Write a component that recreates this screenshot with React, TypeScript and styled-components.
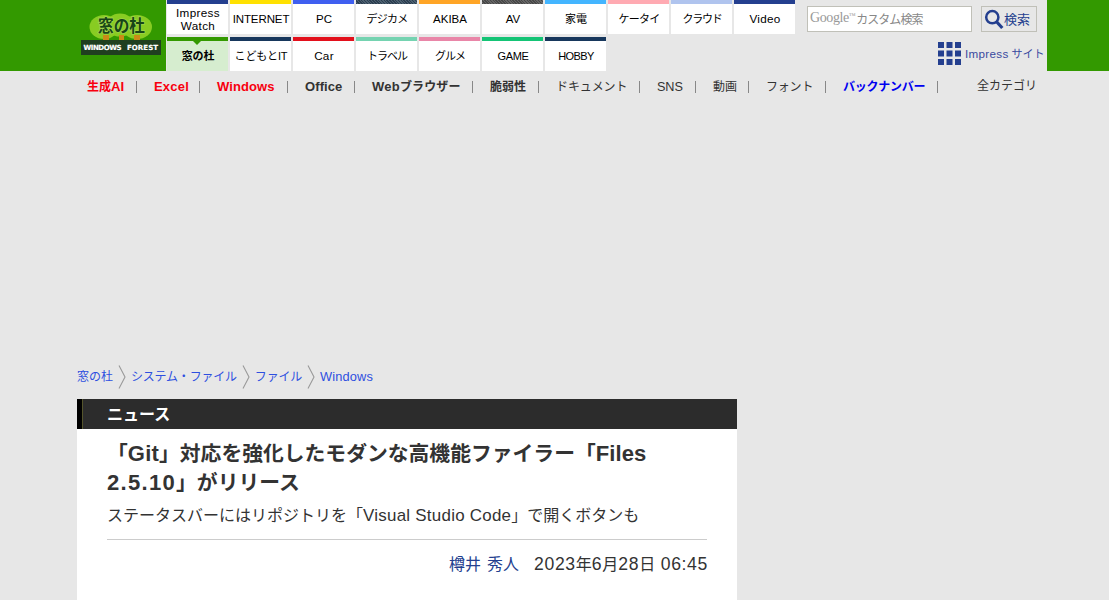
import React from 'react';
import styled, { createGlobalStyle } from 'styled-components';

const GlobalStyle = createGlobalStyle`
  * { box-sizing: border-box; }
  body {
    margin: 0;
    background: #e7e7e7;
    color: #333;
    font-family: "Liberation Sans", "Noto Sans CJK JP", sans-serif;
    overflow: hidden;
  }
  a { color: inherit; text-decoration: none; }
  ul, ol { list-style: none; margin: 0; padding: 0; }
`;

const Header = styled.header`
  display: flex;
  height: 71px;
  background: #339900;
`;

const LogoLink = styled.a`
  width: 166px;
  flex: none;
  padding: 9px 0 0 81px;
  svg { display: block; }
`;

const HeaderInner = styled.div`
  display: flex;
  width: 881px;
  padding-left: 1px;
  background: #e7e7e7;
`;

const Tabs = styled.ul`
  display: grid;
  grid-template-columns: repeat(10, 62px);
  grid-template-rows: 34px 34px;
  gap: 3px 1px;
  width: 640px;
  flex: none;
`;

const Tab = styled.li<{ $bar: string; $stripe?: string; $active?: boolean; $spacing?: number; $size?: number; $lift?: number }>`
  width: 61px;
  display: flex;
  align-items: center;
  justify-content: center;
  position: relative;
  padding: 5px 0 ${p => p.$lift ?? 0}px 1px;
  background:
    repeating-linear-gradient(45deg, ${p => p.$bar} 0 1px, ${p => p.$stripe ?? p.$bar} 1px 2px) 0 0 / 100% 4px no-repeat
    ${p => (p.$active ? '#d6edcf' : '#fff')};
  color: #000;
  font-size: ${p => p.$size ?? 11}px;
  font-weight: ${p => (p.$active ? 700 : 400)};
  line-height: 13px;
  text-align: center;
  letter-spacing: ${p => p.$spacing ?? 0}px;
  white-space: pre;
  ${p => p.$active && `
    &::before {
      content: '';
      position: absolute;
      top: 4px;
      left: 26px;
      border: 4px solid transparent;
      border-top-color: ${p.$bar};
      border-bottom: 0;
    }
  `}
`;

const Tools = styled.div`
  flex: 1;
  padding-top: 6px;
`;

const SearchRow = styled.div`
  display: flex;
  gap: 9px;
`;

const SearchBox = styled.div`
  display: flex;
  align-items: center;
  width: 165px;
  height: 26px;
  padding: 0 0 2px 2px;
  border: 1px solid #c0c0b8;
  background: #fff;
  color: #888;
  font-size: 12px;
  letter-spacing: -0.95px;
`;

const Google = styled.span`
  font-family: "Liberation Serif", serif;
  font-size: 14px;
  letter-spacing: -0.4px;
  color: #999;
  margin-right: 1px;
  sup { font-size: 7px; vertical-align: 4px; line-height: 0; letter-spacing: -0.5px; }
`;

const SearchButton = styled.div`
  display: flex;
  align-items: center;
  width: 56px;
  height: 26px;
  padding: 0 0 2px 2px;
  border: 1px solid #c0c0b8;
  color: #243f8f;
  font-size: 13px;
  svg { position: relative; top: 1px; }
`;

const SiteLink = styled.a`
  display: flex;
  align-items: center;
  gap: 4px;
  margin: 10px 0 0 131px;
  color: #3a4a9f;
  font-size: 11px;
  white-space: nowrap;
  span { padding-bottom: 1px; }
`;

const Categories = styled.ul`
  display: flex;
  height: 31px;
  padding-left: 70px;
  font-size: 12px;
  line-height: 32px;
`;

const Category = styled.li<{ $width: number; $color?: string; $bold?: boolean; $spacing?: number; $size?: number }>`
  display: flex;
  justify-content: space-between;
  width: ${p => p.$width}px;
  flex: none;
  padding-left: 17px;
  color: ${p => p.$color ?? '#333'};
  font-size: ${p => p.$size ?? 12}px;
  font-weight: ${p => (p.$bold ? 700 : 400)};
  letter-spacing: ${p => p.$spacing ?? 0}px;
  white-space: nowrap;
`;

const Divider = styled.i`
  width: 1px;
  height: 12px;
  margin-top: 10px;
  background: #888;
`;

const AllCategories = styled.li`
  padding-left: 39px;
  line-height: 30px;
`;

const AdSpace = styled.div`
  height: 262px;
`;

const Breadcrumbs = styled.ol`
  display: flex;
  align-items: center;
  height: 26px;
  margin: 0 0 9px 77px;
  color: #2e4fe0;
  font-size: 12px;
  line-height: 18px;
  white-space: nowrap;
  svg { flex: none; margin: 0 5px; }
`;

const Crumb = styled.li<{ $spacing?: number; $size?: number }>`
  display: flex;
  align-items: center;
  font-size: ${p => p.$size ?? 12}px;
  letter-spacing: ${p => p.$spacing ?? 0}px;
`;

const Article = styled.article`
  width: 660px;
  height: 201px;
  margin-left: 77px;
  background: #fff;
`;

const Section = styled.div`
  display: flex;
  align-items: center;
  height: 30px;
  padding: 0 0 2px 25px;
  border-left: 5px solid #000;
  background: #2c2c2c;
  box-shadow: inset 1px 0 #55552c;
  color: #fff;
  font-size: 16px;
  font-weight: 700;
`;

const ArticleHead = styled.div`
  padding: 10px 30px 0;
`;

const Title = styled.h1`
  margin: 0;
  font-size: 20.8px;
  line-height: 29px;
  white-space: nowrap;
`;

const Latin = styled.span<{ $spacing?: number; $scale?: number }>`
  font-size: ${p => p.$scale ?? 1.06}em;
  line-height: 1;
  letter-spacing: ${p => p.$spacing ?? 0}px;
`;

const Subtitle = styled.p`
  margin: 6px 0 0;
  padding-bottom: 10px;
  border-bottom: 1px solid #ccc;
  font-size: 16px;
  line-height: 26px;
  white-space: nowrap;
`;

const Byline = styled.p`
  display: flex;
  justify-content: flex-end;
  gap: 15px;
  margin: 12px -1px 0 0;
  font-size: 16px;
  line-height: 25px;
`;

const Author = styled.a`
  color: #243f8f;
  word-spacing: 1.5px;
`;

const tabs: { label: string; bar: string; stripe?: string; active?: boolean; spacing?: number; size?: number; lift?: number }[] = [
  { label: 'Impress\nWatch', bar: '#243f8f', spacing: 0.35, size: 11.7, lift: 2 },
  { label: 'INTERNET', bar: '#ffe100', spacing: -0.1, size: 11.5 },
  { label: 'PC', bar: '#3f5ff0', size: 11.5 },
  { label: 'デジカメ', bar: '#2c3e50', stripe: '#4c6070', spacing: -0.7 },
  { label: 'AKIBA', bar: '#ffa526', size: 11.5 },
  { label: 'AV', bar: '#484848', stripe: '#666', size: 11.5 },
  { label: '家電', bar: '#43b5ff' },
  { label: 'ケータイ', bar: '#ffaab2', spacing: -0.7 },
  { label: 'クラウド', bar: '#b0c4ee', spacing: -1.2 },
  { label: 'Video', bar: '#243f8f', spacing: 0.3, size: 11.7, lift: 2 },
  { label: '窓の杜', bar: '#339900', active: true, spacing: -0.2 },
  { label: 'こどもとIT', bar: '#17375c', spacing: -0.1 },
  { label: 'Car', bar: '#e3101c', spacing: 0.3, size: 11.7, lift: 2 },
  { label: 'トラベル', bar: '#75d3b1', spacing: -1 },
  { label: 'グルメ', bar: '#e986a8', spacing: -1 },
  { label: 'GAME', bar: '#15c476', spacing: -0.3 },
  { label: 'HOBBY', bar: '#17375c', spacing: -0.6 },
];

const categories: { label: React.ReactNode; width: number; color?: string; bold?: boolean; spacing?: number; size?: number }[] = [
  { label: <>生成<Latin $scale={1.1}>AI</Latin></>, width: 67, color: '#f8000f', bold: true },
  { label: 'Excel', width: 63, color: '#f8000f', bold: true, spacing: 0.2, size: 13 },
  { label: 'Windows', width: 88, color: '#f8000f', bold: true, spacing: 0.1, size: 13 },
  { label: 'Office', width: 67, bold: true, spacing: 0.1, size: 13 },
  { label: <><Latin $scale={1.08} $spacing={0.3}>Web</Latin>ブラウザー</>, width: 118, bold: true, spacing: 0.1 },
  { label: '脆弱性', width: 66, bold: true },
  { label: 'ドキュメント', width: 101, spacing: -0.1 },
  { label: 'SNS', width: 56, spacing: -0.1, size: 12.7 },
  { label: '動画', width: 53 },
  { label: 'フォント', width: 77, spacing: -0.2 },
  { label: 'バックナンバー', width: 112, color: '#0000f0', bold: true, spacing: -0.25 },
];

const Logo = () => (
  <svg width="80" height="46" viewBox="0 0 80 46">
    <g fill="#88cc22">
      <ellipse cx="23" cy="18" rx="14.5" ry="12" />
      <ellipse cx="39" cy="16" rx="14" ry="11.5" />
      <ellipse cx="56" cy="18" rx="15" ry="12" />
    </g>
    <path fill="#c98b16" d="M22 26h6v5h-6zM38 26h5v5h-5zM53 26h6v5h-6z" />
    <text x="17" y="23" textLength="47" lengthAdjust="spacingAndGlyphs" fontFamily="Noto Sans CJK JP, sans-serif" fontSize="17" fontWeight="700" fill="#174517" stroke="#9ed34a" strokeWidth="1.6" paintOrder="stroke">窓の杜</text>
    <rect y="31" width="80" height="15" fill="#203f20" />
    <g fontFamily="DejaVu Sans, sans-serif" fontSize="7" fontWeight="700" fill="#fff" stroke="#fff" strokeWidth="0.2">
      <text x="2.5" y="41" textLength="38" lengthAdjust="spacing">WINDOWS</text>
      <text x="46" y="41" textLength="31" lengthAdjust="spacing">FOREST</text>
    </g>
  </svg>
);

const SearchIcon = () => (
  <svg width="20" height="22" viewBox="0 0 20 22" fill="none" stroke="#243f8f">
    <circle cx="8.3" cy="9.2" r="6.1" strokeWidth="2.5" />
    <path d="M12.8 14l5.5 6" strokeWidth="3.2" />
  </svg>
);

const GridIcon = () => (
  <svg width="23" height="23" viewBox="0 0 23 23" fill="#243f8f">
    {[0, 8.5, 17].map(y => [0, 8.5, 17].map(x => <rect key={`${x}-${y}`} x={x} y={y} width="6" height="6" />))}
  </svg>
);

const Chevron = () => (
  <svg width="8" height="26" viewBox="0 0 8 26" fill="none" stroke="#999" strokeWidth="1.1">
    <path d="M1 1.5L7 13 1 24.5" />
  </svg>
);

export default function App() {
  return (
    <>
      <GlobalStyle />
      <Header>
        <LogoLink href="#"><Logo /></LogoLink>
        <HeaderInner>
          <Tabs>
            {tabs.map(t => (
              <Tab key={t.label} $bar={t.bar} $stripe={t.stripe} $active={t.active} $spacing={t.spacing} $size={t.size} $lift={t.lift}>{t.label}</Tab>
            ))}
          </Tabs>
          <Tools>
            <SearchRow>
              <SearchBox><Google>Google<sup>™</sup></Google>カスタム検索</SearchBox>
              <SearchButton><SearchIcon />検索</SearchButton>
            </SearchRow>
            <SiteLink href="#"><GridIcon /><span><Latin $spacing={0.3}>Impress</Latin> サイト</span></SiteLink>
          </Tools>
        </HeaderInner>
      </Header>
      <Categories>
        {categories.map((c, i) => (
          <Category key={i} $width={c.width} $color={c.color} $bold={c.bold} $spacing={c.spacing} $size={c.size}>
            <span>{c.label}</span><Divider />
          </Category>
        ))}
        <AllCategories>全カテゴリ</AllCategories>
      </Categories>
      <AdSpace />
      <Breadcrumbs>
        <Crumb>窓の杜<Chevron /></Crumb>
        <Crumb $spacing={-0.2}>システム・ファイル<Chevron /></Crumb>
        <Crumb $spacing={-0.2}>ファイル<Chevron /></Crumb>
        <Crumb $spacing={0.15} $size={12.8}>Windows</Crumb>
      </Breadcrumbs>
      <Article>
        <Section>ニュース</Section>
        <ArticleHead>
          <Title>
            「<Latin $spacing={0.2}>Git</Latin>」対応を強化したモダンな高機能ファイラー「<Latin $spacing={0.1}>Files</Latin><br />
            <Latin $spacing={1.3}>2.5.10</Latin>」がリリース
          </Title>
          <Subtitle>
            ステータスバーにはリポジトリを「<Latin $spacing={0.25}>Visual Studio Code</Latin>」で開くボタンも
          </Subtitle>
          <Byline>
            <Author href="#">樽井 秀人</Author>
            <time>
              <Latin $scale={1.1} $spacing={0.65}>2023</Latin>年<Latin $scale={1.1} $spacing={0.65}>6</Latin>月<Latin $scale={1.1} $spacing={0.65}>28</Latin>日<Latin $scale={1.1} $spacing={0.65}> 06:45</Latin>
            </time>
          </Byline>
        </ArticleHead>
      </Article>
    </>
  );
}
